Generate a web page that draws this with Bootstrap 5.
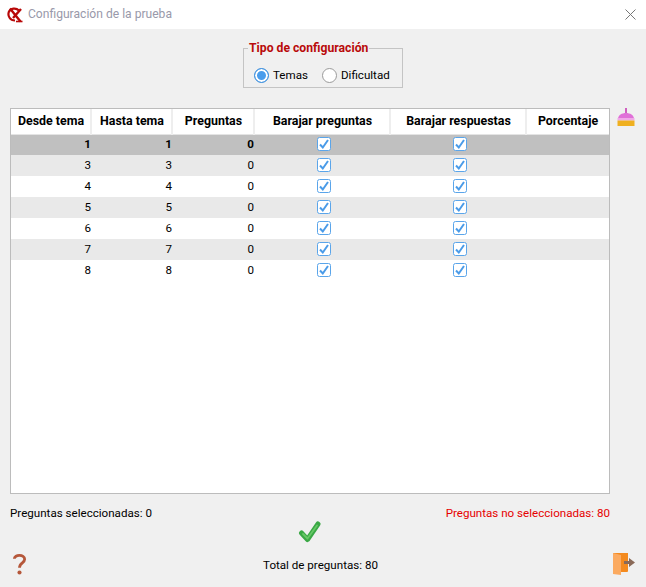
<!DOCTYPE html>
<html lang="es">
<head>
    <meta charset="UTF-8">
    <meta name="viewport" content="width=device-width, initial-scale=1.0">
    <title>Configuración de la prueba</title>
    <link href="https://cdn.jsdelivr.net/npm/bootstrap@5.3.0/dist/css/bootstrap.min.css" rel="stylesheet">
    <style>
        html, body { height: 100%; overflow: hidden; }
        body { background: #f0f0f0; font-family: Roboto, "Liberation Sans", sans-serif; font-size: 11.6px; color: #000; }
        .win { width: 646px; height: 587px; }
        .title-bar { height: 29px; background: #fff; padding-left: 7px; padding-right: 10px; }
        .title-text { color: #99a; font-size: 12.1px; margin-left: 5px; }
        .config-row { height: 79px; padding-top: 4px; }
        .config-box { width: 160px; height: 48px; border: 1px solid #c4c4c4; margin: 7px 0 0 0; padding: 0 0 0 10px; position: relative; }
        .config-box legend { float: none; width: auto; font-size: 12.2px; font-weight: 700; color: #b90a0a; margin: -9px 0 0 -6px; padding: 0 1px; line-height: 16px; background: #f0f0f0; }
        .radio-dot { width: 15px; height: 15px; border-radius: 50%; border: 1px solid #9a9a9a; background: #fff; display: inline-block; margin-right: 4px; }
        .radio-dot.is-on { border-color: #3d8fdc; box-shadow: inset 0 0 0 2px #fff; background: #4a9dec; }
        .radio-gap { gap: 14px; margin-top: 11px; }
        .table-row { padding-left: 10px; }
        .grid-box { width: 600px; height: 386px; background: #fff; border: 1px solid #bcbcbc; }
        .grid-box table { table-layout: fixed; width: 598px; border-collapse: collapse; margin: 0; }
        .grid-box th { height: 25px; padding: 0 0 0 1px; font-size: 12.4px; font-weight: 700; text-align: center; border-right: 2px solid #eee; border-bottom: 1px solid #e4e4e4; background: #fff; line-height: 1; }
        .grid-box th:last-child { border-right: 0; padding-left: 0; }
        .grid-box td { height: 21px; padding: 0; text-align: right; line-height: 1; border: 0; }
        .grid-box tbody tr:nth-child(even) td { background: #e9e9e9; }
        .grid-box tbody tr:nth-child(odd) td { background: #fff; }
        .grid-box tbody tr.row-sel td { background: #c0c0c0; font-weight: 700; }
        .grid-box td.check-cell { text-align: center; padding: 0 0 2px 4px; }
        .tick-box { display: inline-block; width: 14px; height: 14px; vertical-align: middle; }
        .side-tool { width: 36px; padding: 0 0 0 6px; }
        .total-line { padding: 0 36px 0 10px; margin-top: 12px; height: 15px; line-height: 15px; }
        .txt-missing { color: #e60000; }
        .foot-row { height: 65px; padding: 0 10px; }
        .foot-mid { width: 200px; }
        .foot-left { width: 24px; padding: 0 0 10px 2px; }
        .foot-right { width: 29px; padding: 0 0 10px 5px; }
        .ok-mark { margin-right: 22px; }
        .total-txt { margin: 14px 0 13px; line-height: 15px; }
    </style>
</head>
<body>
<div class="win d-flex flex-column">
    <div class="title-bar d-flex align-items-center">
        <svg width="16" height="16" viewBox="0 0 16 16">
            <path d="M12 3.5 C9 0.5 3.5 1 1.8 5 C0.5 9 3 13.5 8 13.5" fill="none" stroke="#b80808" stroke-width="2.2"/>
            <path d="M3 1.5 L13.5 14.5 M14 2 L6 11" fill="none" stroke="#b80808" stroke-width="2.4"/>
            <path d="M9 14.5 H15.5" stroke="#b80808" stroke-width="1.6"/>
        </svg>
        <span class="title-text flex-grow-1">Configuración de la prueba</span>
        <svg width="11" height="11" viewBox="0 0 11 11"><path d="M0.5 0.5 L10.5 10.5 M10.5 0.5 L0.5 10.5" stroke="#777" stroke-width="1"/></svg>
    </div>

    <div class="config-row d-flex justify-content-center">
        <fieldset class="config-box">
            <legend>Tipo de configuración</legend>
            <div class="d-flex align-items-center radio-gap">
                <span class="d-flex align-items-center"><span class="radio-dot is-on"></span>Temas</span>
                <span class="d-flex align-items-center"><span class="radio-dot"></span>Dificultad</span>
            </div>
        </fieldset>
    </div>

    <div class="table-row d-flex">
        <div class="grid-box">
            <table>
                <colgroup>
                    <col style="width:80px"><col style="width:81px"><col style="width:82px"><col style="width:136px"><col style="width:136px"><col style="width:83px">
                </colgroup>
                <thead>
                    <tr><th>Desde tema</th><th>Hasta tema</th><th>Preguntas</th><th>Barajar preguntas</th><th>Barajar respuestas</th><th>Porcentaje</th></tr>
                </thead>
                <tbody id="filas"></tbody>
            </table>
        </div>
        <div class="side-tool">
            <svg width="20" height="20" viewBox="0 0 20 20">
                <rect x="9" y="0" width="2" height="6" fill="#d060c0"/>
                <path d="M2 11 C2 7 6 5 10 5 C14 5 18 7 18 11 Z" fill="#e070d8"/>
                <rect x="1.500" y="10" width="17" height="2.500" fill="#f0a8e8"/>
                <rect x="1.500" y="12.500" width="17" height="5.500" fill="#efb020"/>
            </svg>
        </div>
    </div>

    <div class="total-line d-flex justify-content-between">
        <span>Preguntas seleccionadas: 0</span>
        <span class="txt-missing">Preguntas no seleccionadas: 80</span>
    </div>

    <div class="foot-row d-flex align-items-end justify-content-between">
        <div class="foot-left">
            <svg width="15" height="24" viewBox="0 0 16 24">
                <path d="M2.500 6.500 C2.500 1.500 13.500 1.500 13.500 7 C13.500 11 8 10.500 8 16" fill="none" stroke="#b5573a" stroke-width="3"/>
                <circle cx="8" cy="21" r="2.200" fill="#b5573a"/>
            </svg>
        </div>
        <div class="foot-mid d-flex flex-column align-items-center">
            <svg class="ok-mark" width="24" height="24" viewBox="0 0 24 24">
                <path d="M3.500 13 L9.500 19.500 L20 4" fill="none" stroke="#3aa845" stroke-width="5" stroke-linecap="round" stroke-linejoin="round"/>
                <path d="M5 14 L9.500 18.500 L19 5.500" fill="none" stroke="#66c866" stroke-width="1.800" stroke-linecap="round" stroke-linejoin="round"/>
            </svg>
            <span class="total-txt">Total de preguntas: 80</span>
        </div>
        <div class="foot-right">
            <svg width="24" height="24" viewBox="0 0 24 24">
                <path d="M1 1 H16 V19 Q16 20 15 20 H9 Z" fill="#f48a1e"/>
                <path d="M1 1 L9 3 V23 L1 22 Z" fill="#fbaa60"/>
                <path d="M12 9 H17 V6 L23 10.500 L17 15 V12 H12 Z" fill="#8a6a58"/>
            </svg>
        </div>
    </div>
</div>
<script src="https://cdn.jsdelivr.net/npm/bootstrap@5.3.0/dist/js/bootstrap.bundle.min.js"></script>
<script>
    const tick = '<svg class="tick-box" viewBox="0 0 14 14"><rect x="0.5" y="0.5" width="13" height="13" rx="2" fill="#fff" stroke="#5aa5ea"/><path d="M3 7.500 L5.800 10.500 L11 3" fill="none" stroke="#4a9be8" stroke-width="2"/></svg>';
    const temas = [1, 3, 4, 5, 6, 7, 8];
    document.getElementById('filas').innerHTML = temas.map((t, i) =>
        `<tr class="${i == 0 ? 'row-sel' : ''}"><td>${t}</td><td>${t}</td><td>0</td><td class="check-cell">${tick}</td><td class="check-cell">${tick}</td><td></td></tr>`
    ).join('');
</script>
</body>
</html>
